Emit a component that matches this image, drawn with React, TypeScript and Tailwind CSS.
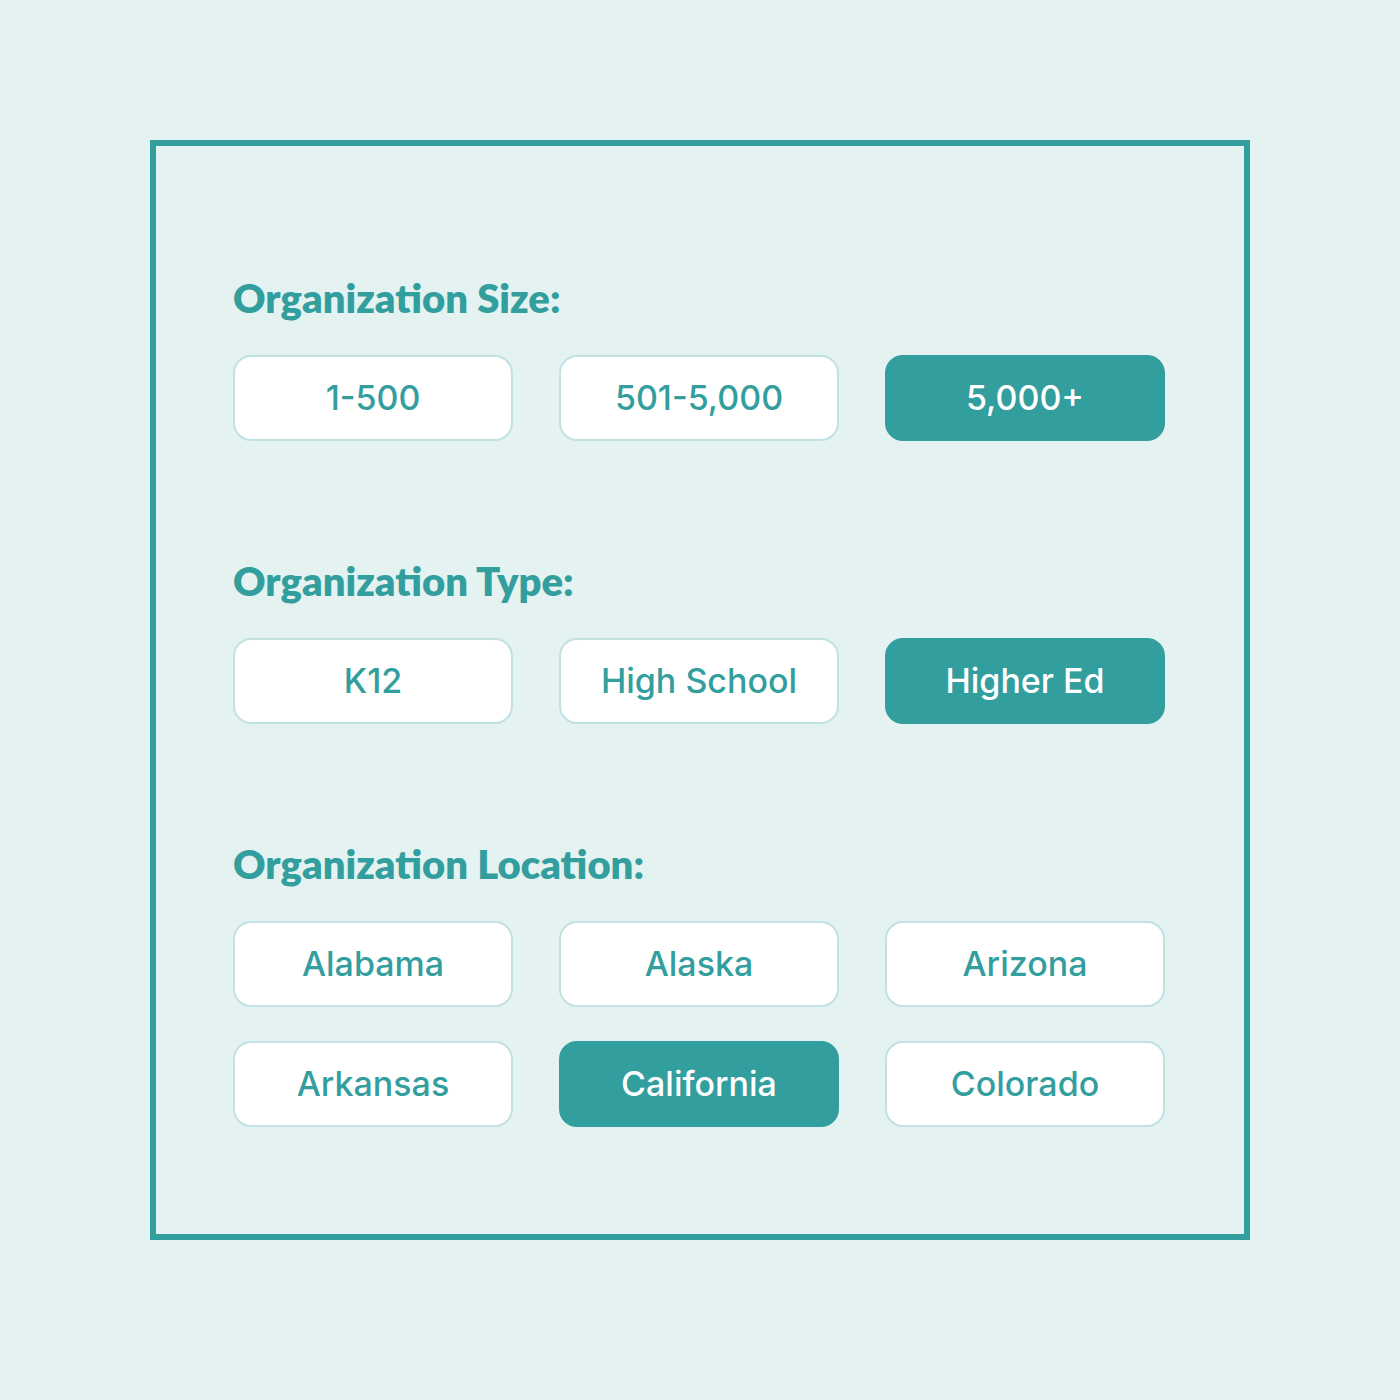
const sections = [
  { title: "Organization Size:", options: ["1-500", "501-5,000", "5,000+"], active: "5,000+" },
  { title: "Organization Type:", options: ["K12", "High School", "Higher Ed"], active: "Higher Ed" },
  {
    title: "Organization Location:",
    options: ["Alabama", "Alaska", "Arizona", "Arkansas", "California", "Colorado"],
    active: "California",
  },
];

const Chip = ({ label, active }: { label: string; active: boolean }) => (
  <button
    className={
      "w-[280px] h-[86px] rounded-[18px] border-2 text-[34px] font-medium leading-none " +
      (active
        ? "bg-[#339e9e] border-[#339e9e] text-white"
        : "bg-white border-[#c2e2e2] text-[#339e9e]")
    }
    style={{ fontFamily: "Inter, 'Liberation Sans', sans-serif" }}
  >
    {label}
  </button>
);

export default function App() {
  return (
    <div className="w-[1400px] h-[1400px] bg-[#e4f2f1] flex justify-center pt-[140px]">
      <div className="w-[1100px] h-[1100px] border-[6px] border-[#339e9e] pl-[77px] pt-[132px]">
        {sections.map((s, i) => (
          <div key={s.title} className={i > 0 ? "mt-[120px]" : ""}>
            <h2
              className="text-[40px] font-extrabold leading-none text-[#339e9e] mb-[37px]"
              style={{ fontFamily: "Lato, 'Liberation Sans', sans-serif" }}
            >
              {s.title}
            </h2>
            <div className="grid grid-cols-[repeat(3,280px)] gap-x-[46px] gap-y-[34px]">
              {s.options.map((o) => (
                <Chip key={o} label={o} active={o === s.active} />
              ))}
            </div>
          </div>
        ))}
      </div>
    </div>
  );
}
